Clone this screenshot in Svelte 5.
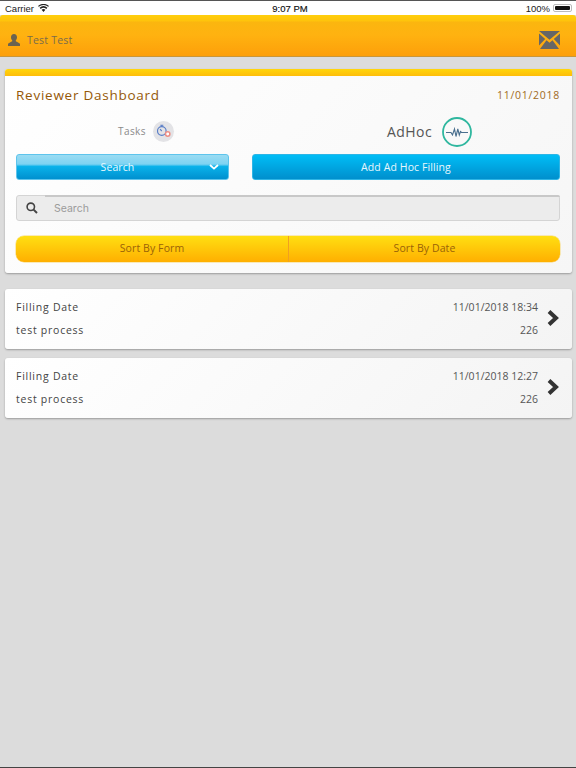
<script>
  const rows = [
    { date: '11/01/2018 18:34', name: 'test process', count: '226' },
    { date: '11/01/2018 12:27', name: 'test process', count: '226' }
  ];
</script>

<div class="page">
  <div class="status">
    <div class="st-left">
      <span>Carrier</span>
      <svg width="11" height="8" viewBox="0 0 11 8"><path d="M5.500 8 L3.600 5.800 A3 3 0 0 1 7.400 5.800Z M2.700 4.900 L1.600 3.700 A6 6 0 0 1 9.400 3.700 L8.300 4.900 A4.300 4.300 0 0 0 2.700 4.900Z M0.800 2.800 L0 1.900 A8.400 8.400 0 0 1 11 1.900 L10.200 2.800 A7.200 7.200 0 0 0 0.800 2.800Z" fill="#222"/></svg>
    </div>
    <div class="st-time">9:07 PM</div>
    <div class="st-right">
      <span>100%</span>
      <span class="batt"><i></i></span>
    </div>
  </div>

  <header class="head">
    <div class="user">
      <svg width="12" height="12" viewBox="0 0 12 12"><path d="M6 0c-1.900 0-3 1.400-3 3.300 0 1.300.5 2.400 1.200 3v1L.6 9.200C.2 9.400 0 9.800 0 10.300V12h12v-1.700c0-.5-.2-.9-.6-1.100L7.800 7.300v-1c.7-.6 1.200-1.700 1.200-3C9 1.400 7.900 0 6 0z" fill="#6b6350"/></svg>
      <span>Test Test</span>
    </div>
    <svg class="mail" width="21" height="18" viewBox="0 0 21 18"><path d="M0 0h21L10.500 8.800zM0 2.600 6.200 8 0 14.600zM21 2.600 14.800 8 21 14.600zM1 18 7.500 9.300 10.500 11.800 13.500 9.300 20 18z" fill="#666"/></svg>
  </header>

  <main class="content">
    <section class="panel">
      <div class="panel-bar"></div>
      <div class="panel-body">
        <div class="title-row">
          <h1>Reviewer Dashboard</h1>
          <span class="today">11/01/2018</span>
        </div>

        <div class="two">
          <div class="col left">
            <div class="label-row">
              <span class="tasks">Tasks</span>
              <span class="task-ico">
                <svg width="21" height="21" viewBox="0 0 21 21">
                  <circle cx="8.800" cy="10" r="4.300" fill="none" stroke="#5b7fc7" stroke-width="1.200"/>
                  <path d="M7.300 4.300h3M8.800 4.300v1.500M8.800 10 7 8.200" stroke="#5b7fc7" stroke-width="1.100" fill="none"/>
                  <circle cx="14.700" cy="13" r="2.200" fill="#fff" stroke="#ee8f86" stroke-width="1.500"/>
                </svg>
              </span>
            </div>
            <button class="blue search-btn">
              <span>Search</span>
              <svg width="10" height="6" viewBox="0 0 10 6"><path d="M1 1l4 3.600L9 1" fill="none" stroke="#fff" stroke-width="1.800"/></svg>
            </button>
          </div>
          <div class="col right">
            <div class="label-row">
              <span class="adhoc">AdHoc</span>
              <span class="ad-ico">
                <svg width="30" height="30" viewBox="0 0 30 30">
                  <circle cx="15" cy="15" r="14" fill="none" stroke="#2fb79f" stroke-width="1.800"/>
                  <path d="M4 15.500h5l1.500 2.500 2-6 1.500 7.500 1.800-7.500 1.500 6 1.200-3.500 1 1H26" fill="none" stroke="#4a6f8e" stroke-width="1.100"/>
                </svg>
              </span>
            </div>
            <button class="blue add-btn">Add Ad Hoc Filling</button>
          </div>
        </div>

        <div class="searchbar">
          <span class="s-ico">
            <svg width="12" height="12" viewBox="0 0 12 12"><circle cx="4.800" cy="4.800" r="3.700" fill="none" stroke="#444" stroke-width="1.600"/><path d="M7.600 7.600 11 11" stroke="#444" stroke-width="2"/></svg>
          </span>
          <input placeholder="Search" />
        </div>

        <div class="sort">
          <button>Sort By Form</button>
          <button>Sort By Date</button>
        </div>
      </div>
    </section>

    {#each rows as r}
      <article class="row">
        <div class="row-text">
          <div class="line"><span class="strong">Filling Date</span><span>{r.date}</span></div>
          <div class="line"><span class="strong">{r.name}</span><span>{r.count}</span></div>
        </div>
        <svg class="chev" width="12" height="16" viewBox="0 0 12 16"><path d="M2 1.500 9 8l-7 6.500" fill="none" stroke="#333" stroke-width="4"/></svg>
      </article>
    {/each}
  </main>
</div>

<style>
  :global(body) { margin: 0; background: #dcdcdc; }
  .page {
    width: 576px; height: 768px; overflow: hidden; box-sizing: border-box;
    background: #dcdcdc; font-family: "Open Sans", sans-serif;
    border-bottom: 1px solid #444;
    display: flex; flex-direction: column;
  }
  .status {
    height: 15px; box-sizing: border-box; background: #fff; border-top: 1px solid #555;
    display: grid; grid-template-columns: 1fr auto 1fr; align-items: center;
    padding: 0 4px 0 5px; font: 9.500px "Liberation Sans", sans-serif; color: #222;
  }
  .st-left { display: flex; align-items: center; gap: 4px; }
  .st-time { color: #111; margin-left: 3px; -webkit-text-stroke: .15px #111; }
  .st-right { display: flex; justify-content: flex-end; align-items: center; gap: 3px; }
  .batt { width: 19px; height: 8px; box-sizing: border-box; border: 1px solid #bbb; border-radius: 2px; padding: 1px; display: block; }
  .batt i { display: block; height: 100%; background: #111; border-radius: 1px; }

  .head {
    height: 42px; box-sizing: border-box; flex: none;
    background: linear-gradient(#ffcf0c 0, #fec30c 6px, #fbb60f 7px, #ffb210 20px, #fd9f0a 100%);
    border-bottom: 1px solid #c9963a;
    border-radius: 3px 3px 0 0;
    display: flex; align-items: center; justify-content: space-between;
    padding: 8px 16px 0 8px;
  }
  .user { display: flex; align-items: center; gap: 7px; font-size: 10.500px; color: #7a6c4c; letter-spacing: .2px; }
  .mail { display: block; margin-top: 0; }

  .content { padding: 12px 4px 0 5px; display: flex; flex-direction: column; }
  .panel {
    height: 204px; border-radius: 3px; background: linear-gradient(135deg, #fff, #f6f6f6);
    box-shadow: 0 1px 2px rgba(0,0,0,.3); overflow: hidden; margin-bottom: 16px;
  }
  .panel-bar { height: 7px; background: linear-gradient(#ffd60c, #febd0a); }
  .panel-body { padding: 9px 12px 0 11px; }
  .title-row { display: flex; justify-content: space-between; align-items: center; height: 19px; }
  h1 { margin: 0; font-size: 13.500px; font-weight: 500; color: #955808; letter-spacing: .75px; }
  .today { font-size: 10.500px; font-weight: 500; color: #a06a22; letter-spacing: .72px; }

  .two { display: grid; grid-template-columns: 213px 308px; column-gap: 23px; margin-top: 10px; }
  .label-row { height: 34px; padding-bottom: 6px; display: flex; align-items: center; justify-content: center; }
  .tasks { font-size: 10px; color: #8a8a8a; letter-spacing: .4px; margin-left: 47px; margin-right: 7px; }
  .task-ico { width: 21px; height: 21px; border-radius: 50%; background: #e3e3e6; display: block; margin-top: 1px; }
  .task-ico svg, .ad-ico svg { display: block; }
  .adhoc { font-size: 14px; color: #555; letter-spacing: .45px; margin-right: 10px; margin-left: 47px; }
  .ad-ico { width: 30px; height: 30px; display: block; margin-top: 1px; }

  button { font-family: "Open Sans", sans-serif; cursor: pointer; }
  .blue {
    width: 100%; height: 26px; border: 1px solid #5ec4ec; border-radius: 3px; color: #e8f7fd;
    font-size: 10.500px; letter-spacing: .1px; padding: 0; display: flex; align-items: center; justify-content: center;
  }
  .search-btn {
    background: linear-gradient(#9adcf3 0, #7ed3f2 38%, #0ab2ea 48%, #0090cf 100%);
    position: relative; padding-right: 10px;
  }
  .search-btn svg { position: absolute; right: 9px; top: 9px; }
  .add-btn { background: linear-gradient(#00bdf6, #008fcd); border-color: #2db5e6; }

  .searchbar {
    margin-top: 15px; height: 26px; box-sizing: border-box; display: flex; align-items: center;
    background: #ececec; border: 1px solid #d4d4d4; border-radius: 3px; position: relative;
  }
  .searchbar::before { content: ""; position: absolute; left: 28px; right: -1px; top: -1px; height: 2px; background: #c8c8c8; border-radius: 0 3px 0 0; }
  .s-ico { width: 29px; display: flex; justify-content: center; padding-left: 0; box-sizing: border-box; }
  .s-ico svg { display: block; }
  input {
    flex: 1; min-width: 0; border: 0; background: transparent; outline: 0; padding: 0 0 0 8px;
    font: 10.500px "Inter", "Liberation Sans", sans-serif;
  }
  input::placeholder { color: #9b9b9b; opacity: 1; }

  .sort {
    margin-top: 15px; height: 26px; display: grid; grid-template-columns: 273px 1fr;
    background: linear-gradient(#ffdf12, #ffaf00); border-radius: 8px; box-shadow: 0 0 0 .5px #f7d873;
  }
  .sort button {
    border: 0; background: transparent; font-size: 10.500px; color: #9a6208; padding: 0 0 2px; letter-spacing: .1px;
  }
  .sort button:first-child { border-right: 1px solid #f0a020; }

  .row {
    height: 60px; box-sizing: border-box; margin-bottom: 9px; border-radius: 3px;
    background: linear-gradient(135deg, #fff, #f4f4f4); box-shadow: 0 1px 2px rgba(0,0,0,.3);
    display: flex; align-items: center; padding: 0 13px 0 11px;
  }
  .row-text { flex: 1; margin-top: -2px; }
  .line { display: flex; justify-content: space-between; font-size: 10.500px; color: #555; height: 23px; align-items: center; }
  .strong { color: #444; letter-spacing: .75px; }
  .chev { margin-left: 9px; margin-top: -2px; display: block; }
</style>
